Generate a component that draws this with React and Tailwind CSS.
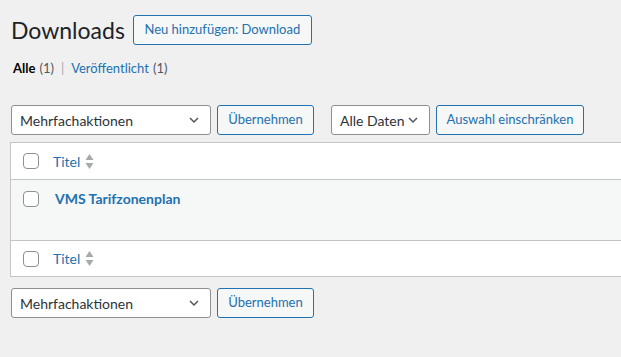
import React from "react";

const Chevron = () => (
  <svg width="16" height="16" viewBox="0 0 20 20" className="shrink-0">
    <path d="M5 7.5l5 5 5-5" fill="none" stroke="#50575e" strokeWidth="1.9" />
  </svg>
);

const SortArrows = () => (
  <svg width="9" height="17" viewBox="0 0 9 17" className="ml-[5px]">
    <path d="M4.5 1L8.5 7H0.5Z" fill="#a7aaad" />
    <path d="M4.5 16L8.5 10H0.5Z" fill="#a7aaad" />
  </svg>
);

const Checkbox = () => (
  <span className="block w-4 h-4 rounded-[4px] border border-[#8c8f94] bg-white" />
);

const Select = ({ label, width }) => (
  <div
    className={`${width} h-[30px] flex items-center justify-between pl-2 pr-2 bg-white border border-[#8c8f94] rounded-[3px] text-[14px] text-[#2c3338] whitespace-nowrap`}
  >
    <span>{label}</span>
    <Chevron />
  </div>
);

const Button = ({ children, className = "" }) => (
  <div
    className={`h-[30px] flex items-center px-[10px] bg-[#f6f7f7] border border-[#2271b1] rounded-[3px] text-[13px] text-[#2271b1] whitespace-nowrap ${className}`}
  >
    {children}
  </div>
);

const BulkActions = () => (
  <div className="flex items-center gap-[6px]">
    <Select label="Mehrfachaktionen" width="w-[200px]" />
    <Button className="w-[97px] justify-center">Übernehmen</Button>
  </div>
);

const TitleHeader = () => (
  <div className="flex items-center text-[14px] text-[#2271b1]">
    Titel
    <SortArrows />
  </div>
);

export default function App() {
  return (
    <div
      className="w-[621px] h-[357px] overflow-hidden bg-[#f0f0f1] text-[#3c434a]"
      style={{ fontFamily: 'Lato, sans-serif' }}
    >
      {/* heading */}
      <div className="flex items-center pl-[11px] pt-[15px]">
        <h1 className="text-[23px] leading-[29px] text-[#1d2327] font-normal">Downloads</h1>
        <Button className="ml-[8px] w-[179px] justify-center">Neu hinzufügen: Download</Button>
      </div>

      {/* views */}
      <div className="flex items-center pl-[13px] mt-[13px] text-[13px] leading-[20px]">
        <span className="font-bold text-black">Alle</span>
        <span className="ml-1 text-[#50575e]">(1)</span>
        <span className="mx-[7px] text-[#a7aaad]">|</span>
        <span className="text-[#2271b1]">Veröffentlicht</span>
        <span className="ml-1 text-[#50575e]">(1)</span>
      </div>

      {/* top tablenav */}
      <div className="flex items-center pl-[11px] mt-[27px]">
        <BulkActions />
        <div className="flex items-center gap-[6px] ml-[17px]">
          <Select label="Alle Daten" width="w-[99px]" />
          <Button className="w-[148px] justify-center">Auswahl einschränken</Button>
        </div>
      </div>

      {/* table */}
      <div className="ml-[10px] mt-[7px] border border-r-0 border-[#c3c4c7] bg-white">
        <div className="h-[37px] flex items-center border-b border-[#c3c4c7]">
          <div className="w-[42px] pl-[12px]">
            <Checkbox />
          </div>
          <TitleHeader />
        </div>
        <div className="h-[61px] flex items-start bg-[#f6f7f7] border-b border-[#c3c4c7]">
          <div className="w-[44px] pl-[12px] pt-[11px]">
            <Checkbox />
          </div>
          <div className="pt-[8px] text-[14px] font-bold text-[#2271b1]">VMS Tarifzonenplan</div>
        </div>
        <div className="h-[35px] flex items-center">
          <div className="w-[42px] pl-[12px]">
            <Checkbox />
          </div>
          <TitleHeader />
        </div>
      </div>

      {/* bottom tablenav */}
      <div className="pl-[11px] mt-[11px]">
        <BulkActions />
      </div>
    </div>
  );
}
